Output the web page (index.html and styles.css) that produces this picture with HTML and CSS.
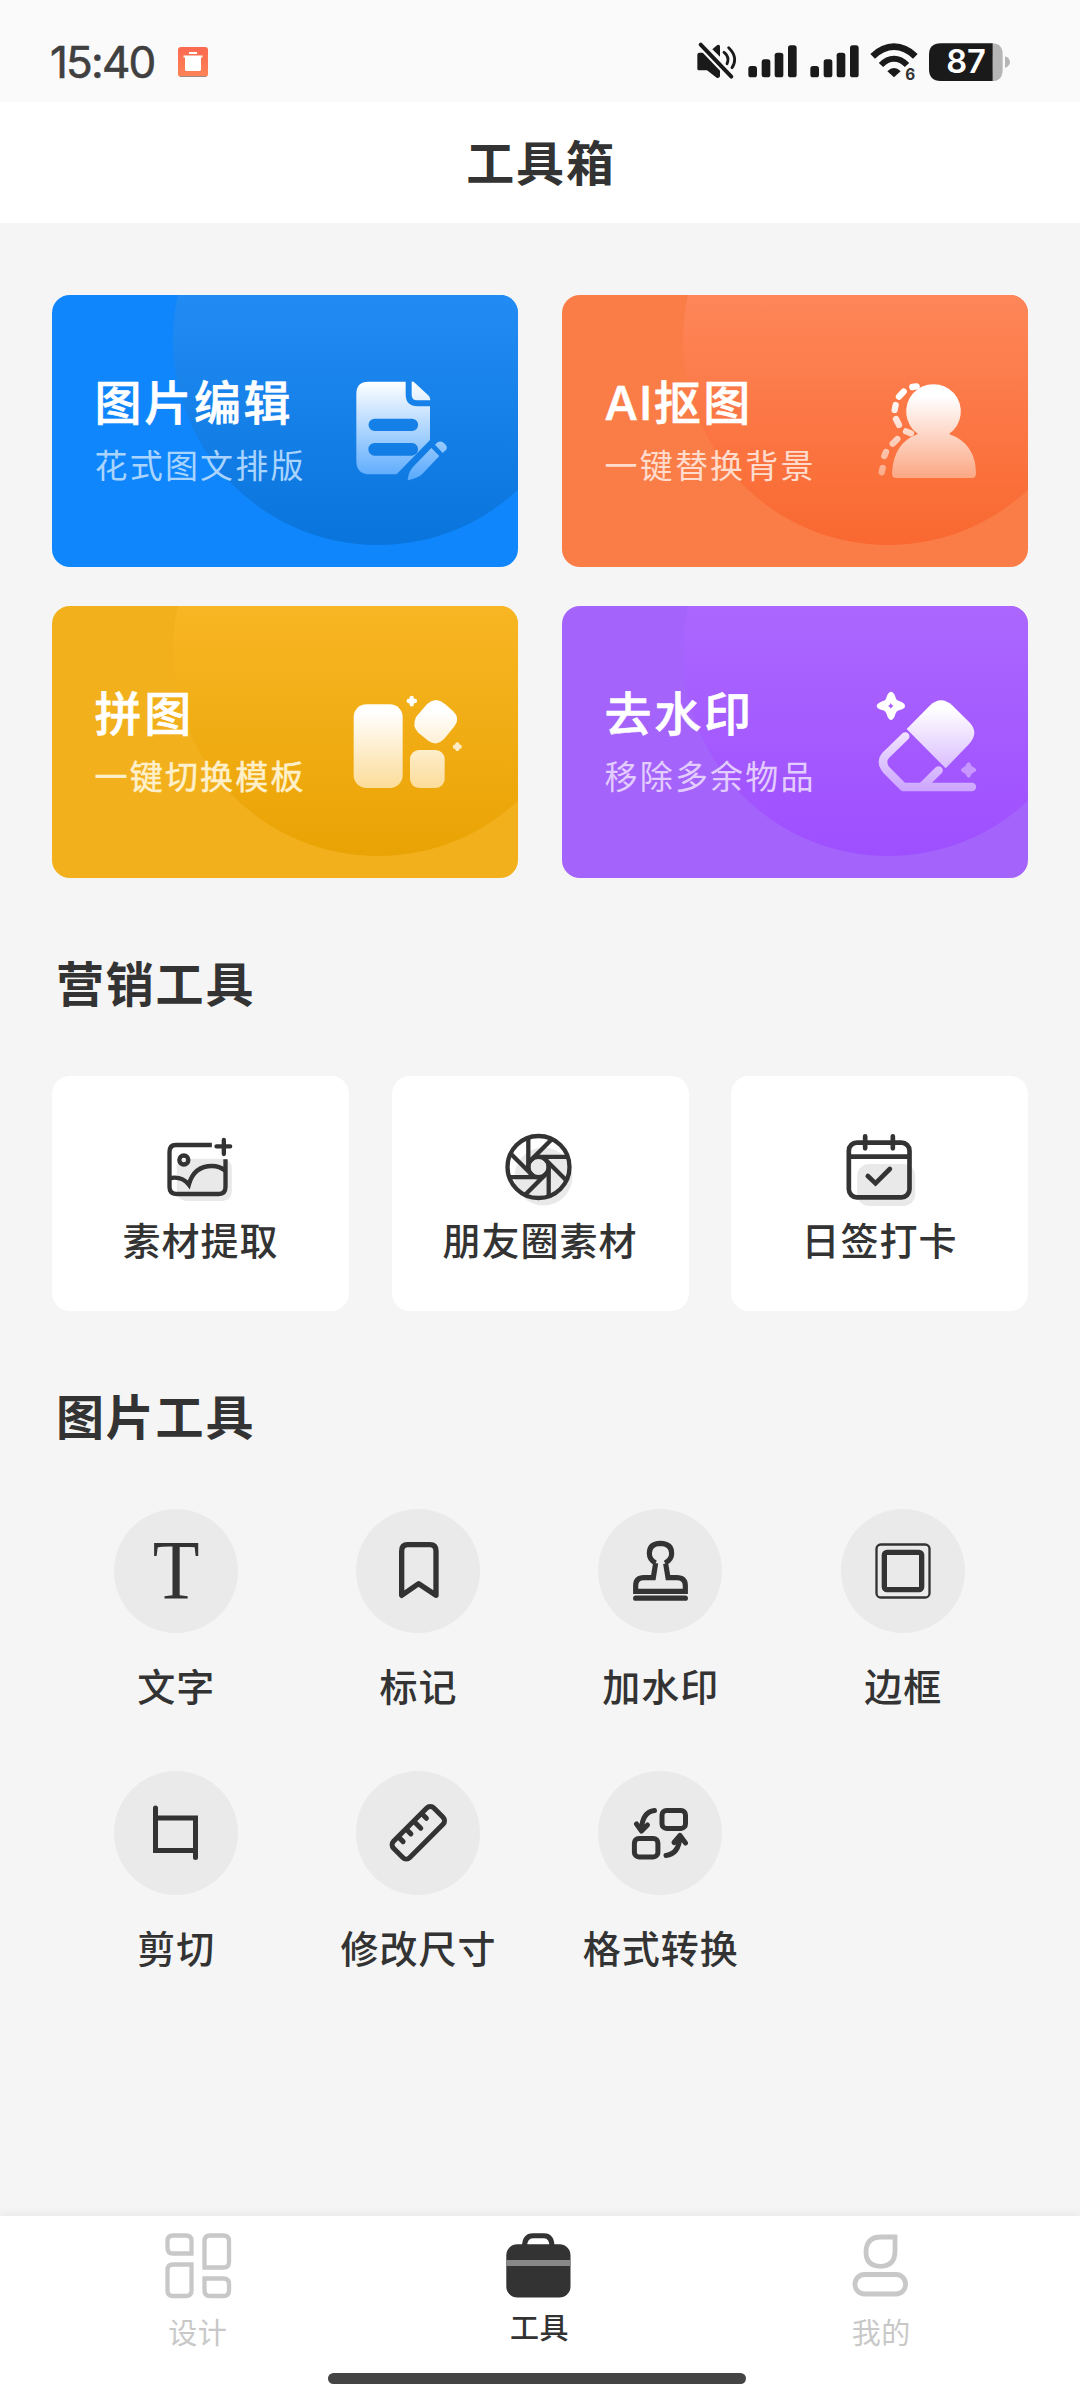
FILE: index.html
```html
<!DOCTYPE html>
<html lang="zh-CN">
<head>
<meta charset="utf-8">
<title>工具箱</title>
<link rel="stylesheet" href="styles.css">
</head>
<body>
<div class="app">
  <div class="status">
    <span class="clock">15:40</span>
    <svg class="trash" viewBox="0 0 30 30">
      <defs><linearGradient id="tr" x1="0" y1="0" x2="0" y2="1"><stop offset="0" stop-color="#fb6850"/><stop offset="1" stop-color="#fd8458"/></linearGradient></defs>
      <rect width="30" height="30" rx="3" fill="url(#tr)"/>
      <path d="M2 29.5H28" stroke="#a08a84" stroke-width="1"/>
      <path d="M11 5h8v2h-8zM5.500 8.500h19v2h-1.500v12q0 1.500-1.500 1.500h-13q-1.500 0-1.500-1.500v-12h-1.500z" fill="#fff"/>
    </svg>
    <div class="indicators">
      <svg width="41" height="40" viewBox="168 125 123 120">
        <g fill="#1a1a1a"><path d="M172 163q0-5 5-6h13l50 51v20q-3 8-10 4l-29-22h-24q-5 0-5-5z"/><path d="M217 147l14-12q7-4 9 3v31z"/></g>
        <g fill="none" stroke="#1a1a1a" stroke-linecap="round" stroke-width="8.500"><path d="M252 156q11 8 12 20 0 9-3 14"/><path d="M266 142q17 16 18 34 0 16-8 26"/></g>
        <path d="M182 133L274 229" stroke="#fafafa" stroke-width="24"/>
        <path d="M182 133L274 229" stroke="#1a1a1a" stroke-width="12" stroke-linecap="round"/>
      </svg>
      <svg class="signal" width="49" height="40" viewBox="324 125 147 120"><g fill="#1a1a1a"><rect x="325" y="197" width="26" height="34" rx="8"/><rect x="365" y="177" width="26" height="54" rx="8"/><rect x="404" y="157" width="26" height="74" rx="8"/><rect x="444" y="135" width="26" height="96" rx="8"/></g></svg>
      <svg class="signal-two" width="49" height="40" viewBox="324 125 147 120"><g fill="#1a1a1a"><rect x="325" y="197" width="26" height="34" rx="8"/><rect x="365" y="177" width="26" height="54" rx="8"/><rect x="404" y="157" width="26" height="74" rx="8"/><rect x="444" y="135" width="26" height="96" rx="8"/></g></svg>
      <svg class="wifi" width="49" height="40" viewBox="690 125 147 120">
        <g fill="none" stroke="#1a1a1a"><path d="M698 168Q728 139 762 139T826 168" stroke-width="20"/><path d="M723 194Q741 175 762 175T801 194" stroke-width="18"/></g>
        <path d="M742 213Q762 193 782 213L762 231z" fill="#1a1a1a"/>
        <text x="811" y="240" text-anchor="middle" class="wifi-gen">6</text>
      </svg>
      <svg class="battery" width="83" height="40" viewBox="864 125 249 120">
        <path d="M1058 129V242H1056Q1088 242 1088 208V163Q1088 129 1056 129z" fill="#b6b6b6"/>
        <path d="M1058 129V242H902Q867 242 867 207V164Q867 129 902 129z" fill="#1a1a1a"/>
        <path d="M1095 168Q1110 174 1110 185T1095 203z" fill="#b6b6b6"/>
        <text x="978" y="219" text-anchor="middle" class="battery-level">87</text>
      </svg>
    </div>
  </div>

  <header class="topbar"><h1>工具箱</h1></header>

  <main>
    <section class="features">
      <article class="feature blue">
        <div class="feature-text"><h3>图片编辑</h3><p>花式图文排版</p></div>
        <svg class="feature-icon" viewBox="930 291 360 330">
          <defs><linearGradient id="b" gradientUnits="userSpaceOnUse" x1="0" y1="305" x2="0" y2="600"><stop offset="0" stop-color="#fff"/><stop offset="1" stop-color="#58a9fd"/></linearGradient></defs>
          <path fill="url(#b)" fill-rule="evenodd" d="M985 305H1097V343Q1097 379 1133 379H1170V480L1070 583H990Q949 583 949 542V342Q949 305 985 305zM1004 416a18 18 0 0 0 0 37h112a18 18 0 0 0 0-37zM1004 489a18 18 0 0 0 0 38h111q21-4 19-21-2-17-21-17z"/>
          <path fill="url(#b)" d="M1115 305Q1120 304 1125 309L1167 348Q1171 353 1171 361H1131Q1115 361 1115 344zM1174 504L1198 528 1146 583Q1135 594 1105 601 1101 600 1104 593 1107 574 1119 561zM1185 494Q1199 477 1214 491T1211 516L1208 519z"/>
        </svg>
      </article>
      <article class="feature orange">
        <div class="feature-text"><h3><span class="latin">AI</span>抠图</h3><p>一键替换背景</p></div>
        <svg class="feature-icon" viewBox="930 291 360 330">
          <defs><linearGradient id="o" gradientUnits="userSpaceOnUse" x1="0" y1="350" x2="0" y2="595"><stop offset="0" stop-color="#fff"/><stop offset="1" stop-color="#fba784"/></linearGradient></defs>
          <path fill="url(#o)" d="M1104 462A82 82 0 1 1 1197 462Q1277 490 1278 580 1278 594 1266 594H1038Q1026 594 1026 580 1030 488 1104 462z"/>
          <g stroke="url(#o)" stroke-width="19" stroke-linecap="round"><path d="M1087 321L1100 319M1061 335L1047 350M1037 375L1034 390M1038 417L1047 435M1068 454L1083 460M1042 477L1028 491M1008 516L1003 528M998 564L995 577"/></g>
        </svg>
      </article>
      <article class="feature yellow">
        <div class="feature-text"><h3>拼图</h3><p>一键切换模板</p></div>
        <svg class="feature-icon" viewBox="930 294 360 330">
          <defs><linearGradient id="y" gradientUnits="userSpaceOnUse" x1="0" y1="365" x2="0" y2="595"><stop offset="0" stop-color="#fff"/><stop offset="1" stop-color="#fcdc98"/></linearGradient></defs>
          <g fill="url(#y)"><rect x="941" y="343" width="147" height="251" rx="38"/><rect x="1110" y="480" width="104" height="114" rx="27"/><path d="M1162 341Q1188 319 1214 341L1239 363Q1262 385 1244 408L1214 445Q1188 474 1159 448L1135 428Q1115 409 1128 381z"/></g>
          <g stroke-width="13" stroke-linecap="round"><path d="M1115 324V343M1106 333H1125" stroke="#fff"/><path d="M1252 463V477M1245 470H1259" stroke="#fdecc5"/></g>
        </svg>
      </article>
      <article class="feature purple">
        <div class="feature-text"><h3>去水印</h3><p>移除多余物品</p></div>
        <svg class="feature-icon" viewBox="930 294 360 330">
          <defs><linearGradient id="p" gradientUnits="userSpaceOnUse" x1="0" y1="355" x2="0" y2="600"><stop offset="0" stop-color="#fff"/><stop offset="1" stop-color="#cda6ff"/></linearGradient></defs>
          <path fill="url(#p)" d="M1070 417L1139 347Q1173 314 1208 347L1258 397Q1288 428 1258 461L1187 535z"/>
          <g fill="none" stroke="url(#p)" stroke-width="25" stroke-linecap="round" stroke-linejoin="round"><path d="M1066 439L1009 494Q989 515 1009 540L1060 591H1266"/><path d="M1166 541L1116 590"/></g>
          <path fill="#fff" fill-rule="evenodd" d="M1023 305Q1032 305 1038 326 1041 332 1047 333 1065 339 1065 348T1047 361Q1040 363 1037 370 1032 390 1023 390T1009 370Q1006 363 999 361 980 356 980 348T999 333Q1006 331 1008 326 1014 305 1023 305zM1022 339q-2 7-8 9 6 2 8 8 3-6 9-8-6-2-9-9z"/>
          <path fill="#c796ff" d="M1256 517Q1261 517 1265 529 1279 536 1279 540T1265 551Q1260 563 1256 563T1246 551Q1233 545 1233 540T1246 529Q1251 517 1256 517z"/>
        </svg>
      </article>
    </section>

    <h2>营销工具</h2>
    <section class="marketing">
      <article class="promo">
        <svg width="80" height="80" viewBox="362.500 570 240 240">
          <rect x="410" y="656" width="165" height="127" rx="28" fill="#e9e9e9"/>
          <g fill="none" stroke="#333" stroke-width="13">
            <path d="M515 615H407Q388 615 388 636V741Q388 762 409 762H536Q556 762 556 741V658"/>
            <circle cx="431" cy="660" r="13.500"/>
            <path d="M391 714Q426 708 446 734 461 678 516 678 537 678 556 692"/>
            <path d="M551 600V642M529 619H570" stroke-linecap="round"/>
          </g>
        </svg>
        <span>素材提取</span>
      </article>
      <article class="promo">
        <svg width="80" height="80" viewBox="0 0 80 80">
          <circle cx="43.500" cy="46.500" r="29" fill="#e9e9e9"/>
          <g transform="translate(38.500 37)" fill="none" stroke="#333" stroke-width="4.300">
            <circle r="31"/><circle r="10.200"/>
            <path id="blade" d="M-10.200 4V-29"/>
            <use href="#blade" transform="rotate(45)"/><use href="#blade" transform="rotate(90)"/><use href="#blade" transform="rotate(135)"/><use href="#blade" transform="rotate(180)"/><use href="#blade" transform="rotate(225)"/><use href="#blade" transform="rotate(270)"/><use href="#blade" transform="rotate(315)"/>
          </g>
        </svg>
        <span>朋友圈素材</span>
      </article>
      <article class="promo">
        <svg width="80" height="80" viewBox="899.500 210 240 240">
          <rect x="951" y="312" width="174" height="126" rx="35" fill="#e9e9e9"/>
          <g fill="none" stroke="#333" stroke-width="14">
            <rect x="926" y="248" width="182" height="164" rx="24"/>
            <path d="M926 290H1108"/>
            <path d="M975 229V265M1058 229V265M983 348L1006 370 1049 327" stroke-linecap="round"/>
          </g>
        </svg>
        <span>日签打卡</span>
      </article>
    </section>

    <h2>图片工具</h2>
    <section class="tools">
      <div class="tool"><svg viewBox="0 0 124 124"><text transform="translate(62 90) scale(.9 1)" text-anchor="middle" class="letter">T</text></svg><span>文字</span></div>
      <div class="tool"><svg viewBox="948 417 372 372"><path d="M1085 676V543Q1085 524 1103 524H1170Q1188 524 1188 543V676L1136 641z" fill="none" stroke="#333" stroke-width="16" stroke-linejoin="round"/></svg><span>标记</span></div>
      <div class="tool"><svg viewBox="114 87 372 372"><g fill="none" stroke="#333" stroke-width="15.500"><path d="M287 249Q268 240 268 220 268 191 301 190 335 191 335 220 335 240 315 249M287 249L280 293H252Q227 293 227 317V334H376V317Q376 293 350 293H324L317 251"/><path d="M227 354.500H376" stroke-linecap="round"/></g></svg><span>加水印</span></div>
      <div class="tool"><svg viewBox="843 87 372 372"><g fill="none" stroke="#333"><rect x="949.500" y="193.500" width="159" height="159" rx="13" stroke-width="7"/><rect x="973" y="217" width="112" height="112" rx="8" stroke-width="16"/></g></svg><span>边框</span></div>
      <div class="tool"><svg viewBox="0 0 124 124"><g fill="none" stroke="#333" stroke-width="5"><path d="M41.500 37V79.500H81.500M41 47H81.500V86.500"/><path d="M41.500 37V70M81.500 58V86.500" stroke-linecap="round"/></g></svg><span>剪切</span></div>
      <div class="tool"><svg viewBox="0 0 124 124"><g transform="translate(62.300 61.800) rotate(-45)" fill="none" stroke="#333" stroke-width="5"><rect x="-28.500" y="-11.500" width="57" height="23" rx="5"/><path d="M-17 -11V-4.500M-6 -11V-4.500M5 -11V-1.500M16 -11V-4.500" stroke-linecap="round"/></g></svg><span>修改尺寸</span></div>
      <div class="tool"><svg viewBox="0 0 124 124"><g fill="none" stroke="#333" stroke-width="5" stroke-linecap="round" stroke-linejoin="round"><rect x="64" y="39.400" width="23.500" height="18" rx="4.500"/><rect x="36.400" y="67.400" width="23.500" height="18.500" rx="4.500"/><path d="M56.500 39.500Q44 41 43.500 59M38.500 53L43.500 60 49.500 54M68 84.500Q81 83 82 65M76 71.500L82 64.500 87.500 72"/></g></svg><span>格式转换</span></div>
    </section>
  </main>

  <nav class="tabbar">
    <div class="tab">
      <svg width="72" height="72" viewBox="0 0 72 72"><g fill="none" stroke="#c8c8c8" stroke-width="4.300"><path d="M29.500 23.500V11Q29.500 5.500 24 5.500H11Q5.500 5.500 5.500 11V18Q5.500 23.500 11 23.500z"/><path d="M29.500 34.500V60.500Q29.500 66 24 66H11Q5.500 66 5.500 60.500V40Q5.500 34.500 11 34.500z"/><path d="M42.500 37.500V11Q42.500 5.500 48 5.500H61.500Q67 5.500 67 11V32Q67 37.500 61.500 37.500z"/><path d="M42.500 48.500H61.500Q67 48.500 67 54V60.500Q67 66 61.500 66H48Q42.500 66 42.500 60.500z"/></g></svg>
      <span>设计</span>
    </div>
    <div class="tab active">
      <svg width="72" height="72" viewBox="0 0 72 72"><path d="M21.500 17Q21.500 5.800 30 5.800H41Q49 5.800 49 17" fill="none" stroke="#333" stroke-width="5"/><rect x="3.300" y="14.300" width="64.200" height="53.200" rx="11" fill="#333"/><rect x="3.300" y="30" width="64.200" height="6" fill="#888"/></svg>
      <span>工具</span>
    </div>
    <div class="tab">
      <svg width="72" height="72" viewBox="0 0 72 72"><g fill="none" stroke="#c8c8c8" stroke-width="4.800"><path d="M50 7V21Q50 36 35.500 36.300 21 36 21 22 21 7 36 7z"/><rect x="10" y="44.500" width="50.500" height="19.500" rx="9.500"/></g></svg>
      <span>我的</span>
    </div>
  </nav>
  <div class="home"><i></i></div>
</div>
</body>
</html>
```
FILE: styles.css
```css
* { box-sizing: border-box; margin: 0; padding: 0; }
body { background: #f5f5f5; color: #333; font-family: "Noto Sans CJK SC", sans-serif; }
svg { display: block; flex: none; overflow: visible; }
.app { width: 1080px; height: 2400px; display: flex; flex-direction: column; overflow: hidden; }

.status { height: 102px; flex: none; background: #fafafa; padding: 0 69px 0 50px; display: flex; align-items: flex-start; }
.clock { width: 128px; flex: none; margin-top: 34px; font: 400 44px/56px Inter, sans-serif; letter-spacing: -1.800px; color: #404040; -webkit-text-stroke: 0.6px #404040; }
.trash { width: 30px; height: 30px; margin-top: 47px; }
.indicators { display: flex; margin: 42px 0 0 auto; }
.signal { margin-left: 11px; }
.signal-two { margin-left: 13px; }
.wifi { margin-left: 11px; }
.battery { margin-left: 9px; }
.wifi-gen { font: 700 46px Inter, sans-serif; fill: #333; }
.battery-level { font: 600 98px Inter, sans-serif; fill: #fff; }

.topbar { height: 121px; flex: none; background: #fff; display: flex; align-items: center; justify-content: center; padding: 0 0 5px 2px; }
h1, h2 { font-size: 48px; line-height: 60px; font-weight: 700; letter-spacing: 1.8px; }

main { flex: 1; padding: 72px 52px 0; }
h2 { margin: 73px 0 65px; padding-left: 4px; }

.features { display: grid; grid-template-columns: 466px 466px; gap: 39px 44px; }
.feature { height: 272px; border-radius: 18px; padding: 0 48px 0 42.500px; display: flex; justify-content: space-between; position: relative; overflow: hidden; color: #fff; }
.feature::before { content: ""; position: absolute; left: 121px; top: -160px; width: 410px; height: 410px; border-radius: 50%; background: linear-gradient(var(--from) 160px, var(--to)); }
.feature-text { position: relative; padding-top: 75px; }
.feature h3 { height: 60px; font-size: 47px; line-height: 60px; font-weight: 500; letter-spacing: 2.700px; white-space: nowrap; -webkit-text-stroke: 0.6px #fff; }
.latin { font-family: Inter, sans-serif; line-height: 1; letter-spacing: 1.500px; }
.feature p { font-size: 33px; line-height: 44px; margin-top: 12px; font-weight: 400; letter-spacing: 2.200px; color: var(--sub); white-space: nowrap; }
.feature-icon { position: relative; width: 120px; height: 110px; margin-top: 82px; }
.blue { background: #0f86fb; --from: #228cf4; --to: #0874dc; --sub: #a9d4ff; }
.orange { background: #fa7d47; --from: #fe8659; --to: #f96830; --sub: #ffdccd; }
.yellow { background: #f1b01c; --from: #f8b624; --to: #eaa304; --sub: #fff0cc; }
.yellow p { -webkit-text-stroke: 0.5px var(--sub); }
.purple { background: #a463fa; --from: #ab67ff; --to: #9e4fff; --sub: #e3ccff; }

.marketing { display: grid; grid-template-columns: repeat(3, 297px); justify-content: space-between; }
.promo { height: 235px; background: #fff; border-radius: 18px; padding-top: 54px; display: flex; flex-direction: column; align-items: center; gap: 4px; }
.promo span, .tool span { font-size: 38px; line-height: 50px; font-weight: 500; letter-spacing: 1px; }
.tool span { padding-left: 1px; }

.tools { display: grid; grid-template-columns: repeat(4, 242.300px); row-gap: 61px; margin-left: 2.600px; }
.tool { display: flex; flex-direction: column; align-items: center; gap: 27px; }
.tool svg { width: 124px; height: 124px; border-radius: 50%; background: #eaeaea; }
.letter { font: 400 85px "Liberation Serif", serif; fill: #333; }

.tabbar { height: 144px; flex: none; background: #fff; padding: 14px 28px 0 27px; display: grid; grid-template-columns: repeat(3, 1fr); box-shadow: 0 -3px 8px rgba(0, 0, 0, .05); }
.tab { display: flex; flex-direction: column; align-items: center; gap: 9px; color: #c8c8c8; font-size: 29px; line-height: 40px; letter-spacing: .5px; }
.active { color: #333; gap: 4px; font-weight: 500; }
.home { height: 40px; flex: none; background: #fff; padding-top: 13px; display: flex; justify-content: center; }
.home i { width: 418px; height: 11px; border-radius: 6px; background: #444; margin-right: 6px; }
```
